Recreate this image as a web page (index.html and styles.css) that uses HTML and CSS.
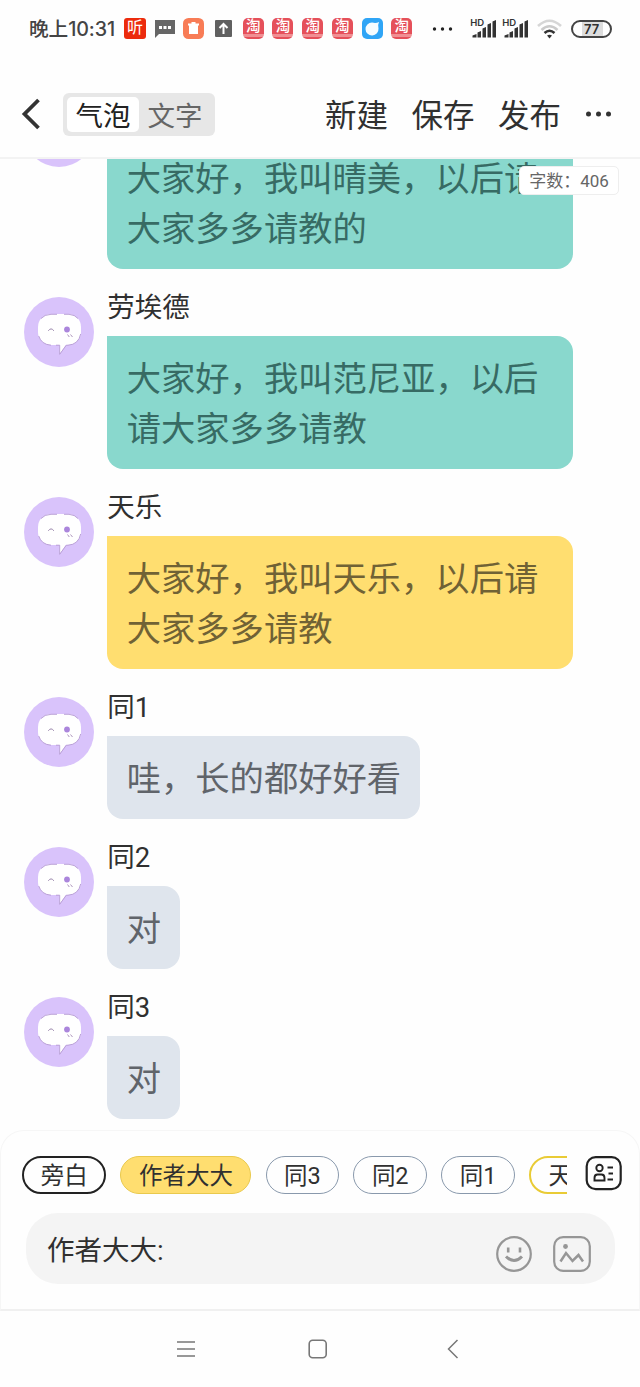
FILE: index.html
```
<!DOCTYPE html>
<html lang="zh-CN">
<head>
<meta charset="utf-8">
<title>气泡</title>
<link rel="stylesheet" href="styles.css">
</head>
<body>
<svg class="defs" width="0" height="0">
  <symbol id="avatar" viewBox="0 0 70 70">
    <circle cx="35" cy="35" r="35" fill="#d9c3fb"/>
    <rect x="14" y="17" width="43" height="31" rx="13" fill="#fff"/>
    <path d="M35.500 47V57.300L42.500 47Z" fill="#fff"/>
    <path d="M17 21.500Q20.500 17.500 27 17.300H33M40 17.300H45Q51 17.800 54 21.500M56.700 37Q54.500 47.500 44 48.200H42.300L35.700 57.300V48.200H32M27 48.200Q17.500 47.500 14.700 39" fill="none" stroke="#b49ad2" stroke-width=".9"/>
    <path d="M24.300 33.800Q27 30 29.900 33.800" fill="none" stroke="#9a86ac" stroke-width="1"/>
    <circle cx="43" cy="32.500" r="2.900" fill="#ab86dc"/>
    <path d="M43.500 37.500l1.800 2.500M46.500 37.500l2 2.500" stroke="#a58bb5" stroke-width=".9"/>
  </symbol>
  <symbol id="signal" viewBox="0 0 26 20">
    <path d="M1.500 18.500V16.500L5.500 15V18.500ZM6.500 18.500V13.500L10 12V18.500ZM11.500 18.500V9.500L15 8V18.500ZM16.500 18.500V5.500L20 4V18.500ZM21.500 18.500V2.500L25 1V18.500Z" fill="#333"/>
  </symbol>
</svg>

<header class="status">
  <span class="clock">晚上10:31</span>
  <div class="notices">
    <span class="app listen">听</span>
    <svg width="20" height="19" viewBox="0 0 20 19"><path d="M0 1H20V15H4L0 19Z" fill="#666"/><path d="M4 7h3v3H4zM8.500 7h3v3h-3zM13 7h3v3h-3z" fill="#fff"/></svg>
    <svg width="21" height="21" viewBox="0 0 21 21"><rect width="21" height="21" rx="5.500" fill="#f87c56"/><path d="M5 5.500H8.500V4H12.500V5.500H16V7.500H15V16H6V7.500H5Z" fill="#fff"/></svg>
    <svg class="up" width="17" height="17" viewBox="0 0 17 17"><rect width="17" height="17" rx="1" fill="#606060"/><path d="M8.500 14V4M4.500 8L8.500 4L12.500 8" fill="none" stroke="#fff" stroke-width="2"/></svg>
    <span class="app tao">淘</span>
    <span class="app tao">淘</span>
    <span class="app tao">淘</span>
    <span class="app tao">淘</span>
    <svg width="21" height="21" viewBox="0 0 21 21"><rect width="21" height="21" rx="5" fill="#2fa5f6"/><path d="M10 4.500Q14 5.500 17 4Q15.500 7 16.500 10.500A6.500 6.500 0 1 1 10 4.500Z" fill="#f5fcff"/></svg>
    <span class="app tao">淘</span>
  </div>
  <svg class="more" width="22" height="4" viewBox="0 0 22 4"><g fill="#222"><circle cx="2.500" cy="2" r="1.700"/><circle cx="10.500" cy="2" r="1.700"/><circle cx="18.500" cy="2" r="1.700"/></g></svg>
  <div class="radio"><span class="hd">HD</span><svg width="26" height="20"><use href="#signal"/></svg></div>
  <div class="radio second"><span class="hd">HD</span><svg width="26" height="20"><use href="#signal"/></svg></div>
  <svg class="wifi" width="25" height="20" viewBox="0 0 25 20"><g fill="none" stroke-width="2.600"><path d="M1 7Q12.500-3.500 24 7" stroke="#d6d6d6"/><path d="M4.500 11Q12.500 3.500 20.500 11" stroke="#cbcbcb"/><path d="M7.500 14Q12.500 9.500 17.500 14" stroke="#333"/></g><path d="M10 16.500Q12.500 15 15 16.500L12.500 19.500Z" fill="#333"/></svg>
  <span class="battery">77</span>
</header>

<nav class="toolbar">
  <svg class="back" width="20" height="34" viewBox="0 0 20 34"><path d="M17.500 3L3.500 17L17.500 31" fill="none" stroke="#333" stroke-width="3.800"/></svg>
  <div class="tabs"><span class="tab active">气泡</span><span class="tab">文字</span></div>
  <div class="actions"><span>新建</span><span>保存</span><span>发布</span></div>
  <svg class="menu" width="28" height="6" viewBox="0 0 28 6"><g fill="#333"><circle cx="3.500" cy="3" r="2.500"/><circle cx="13.500" cy="3" r="2.500"/><circle cx="23.500" cy="3" r="2.500"/></g></svg>
</nav>

<main class="chat">
  <div class="count">字数：406</div>
  <div class="messages">
    <article class="message"><svg class="avatar"><use href="#avatar"/></svg><div class="content"><div class="name"></div><div class="bubble teal">大家好，我叫晴美，以后请大家多多请教的</div></div></article>
    <article class="message"><svg class="avatar"><use href="#avatar"/></svg><div class="content"><div class="name">劳埃德</div><div class="bubble teal">大家好，我叫范尼亚，以后请大家多多请教</div></div></article>
    <article class="message"><svg class="avatar"><use href="#avatar"/></svg><div class="content"><div class="name">天乐</div><div class="bubble yellow">大家好，我叫天乐，以后请大家多多请教</div></div></article>
    <article class="message"><svg class="avatar"><use href="#avatar"/></svg><div class="content"><div class="name">同1</div><div class="bubble gray">哇，长的都好好看</div></div></article>
    <article class="message"><svg class="avatar"><use href="#avatar"/></svg><div class="content"><div class="name">同2</div><div class="bubble gray">对</div></div></article>
    <article class="message"><svg class="avatar"><use href="#avatar"/></svg><div class="content"><div class="name">同3</div><div class="bubble gray">对</div></div></article>
  </div>
</main>

<section class="composer">
  <div class="roles">
    <div class="chips">
      <span class="chip narrator">旁白</span><span class="chip author">作者大大</span><span class="chip">同3</span><span class="chip">同2</span><span class="chip">同1</span><span class="chip gold">天</span>
    </div>
    <svg class="contacts" width="37" height="35" viewBox="0 0 37 35"><g fill="none" stroke="#222"><rect x="1.700" y="1.200" width="34" height="32" rx="9" stroke-width="2.200"/><circle cx="14.500" cy="12" r="3.200" stroke-width="1.900"/><path d="M9.500 24.500V22Q9.500 18.500 12.500 18.500H16.500Q19.500 18.500 19.500 22V24.500Z" stroke-width="1.900"/><path d="M22.500 11.500H28M23.500 17.500H28M22.500 23.500H28" stroke-width="2"/></g></svg>
  </div>
  <div class="input">
    <span class="draft">作者大大:</span>
    <svg width="36" height="36" viewBox="0 0 36 36"><g fill="none" stroke="#969696"><circle cx="18" cy="18" r="16.800" stroke-width="2.200"/><path d="M12.200 11.500V16.500M24 11.500V16.500" stroke-width="2.600"/><path d="M10 20.500Q18 28.500 26 20.500" stroke-width="3"/></g></svg>
    <svg width="38" height="36" viewBox="0 0 38 36"><g fill="none" stroke="#969696" stroke-width="2.200"><rect x="1.200" y="1.200" width="35.600" height="33.600" rx="9"/><path d="M7.500 25.500L13 17L19.500 25L25.500 19L30 25.500" stroke-width="2.500"/></g><circle cx="12.500" cy="10.500" r="2.400" fill="#969696"/></svg>
  </div>
</section>

<footer class="system">
  <svg width="18" height="18" viewBox="0 0 18 18"><path d="M0 2H18M0 9H18M0 16H18" stroke="#777" stroke-width="1.500"/></svg>
  <svg width="20" height="20" viewBox="0 0 20 20"><rect x="1.200" y="1.200" width="17" height="17.600" rx="3.500" fill="none" stroke="#777" stroke-width="1.600"/></svg>
  <svg width="12" height="20" viewBox="0 0 12 20"><path d="M10.500 1L1.500 10L10.500 19" fill="none" stroke="#777" stroke-width="1.500"/></svg>
</footer>
</body>
</html>
```
FILE: styles.css
```
* { box-sizing: border-box; }
body {
  margin: 0;
  width: 640px;
  height: 1387px;
  overflow: hidden;
  display: flex;
  flex-direction: column;
  background: #fefefe;
  color: #303030;
  font-family: Roboto, "Noto Sans CJK SC", sans-serif;
  font-weight: 400;
  white-space: nowrap;
}
svg { display: block; flex: none; }
.defs { position: absolute; }

.status {
  height: 57px;
  flex: none;
  padding-left: 29px;
  display: flex;
  align-items: center;
}
.clock {
  width: 95px;
  font: 500 19.7px/30px Inter, "Noto Sans CJK SC", sans-serif;
  letter-spacing: -0.1px;
  color: #444;
}
.notices { display: flex; align-items: center; gap: 8.7px; }
.notices .up { margin: 0 2px; }
.app {
  width: 21px;
  height: 21px;
  border-radius: 5px;
  color: #fff;
  text-align: center;
  font-size: 16px;
  line-height: 20px;
}
.listen { background: #ec2b0d; border-radius: 3px; width: 22px; }
.tao {
  background: linear-gradient(#e5505a 76%, #f08f93 76%, #f08f93 90%, #e5505a 90%);
  font-size: 14.5px;
  font-weight: 500;
  line-height: 17px;
}
.more { margin-left: 20px; }
.radio { position: relative; margin-left: 17px; }
.radio.second { margin-left: 6px; }
.hd {
  position: absolute;
  left: -1px;
  top: -1px;
  font: 600 9.5px/9px Inter, sans-serif;
  color: #333;
}
.wifi { margin-left: 8px; }
.battery {
  width: 41px;
  height: 18px;
  margin-left: 9px;
  border: 2px solid #444;
  border-radius: 9px;
  background: linear-gradient(90deg, #fff 24%, #ddd 24%, #ddd 82%, #fff 82%);
  font: 600 13px/14px Inter, sans-serif;
  text-align: center;
}

.toolbar {
  height: 102px;
  flex: none;
  padding: 13px 0 0 21px;
  border-bottom: 2px solid #f3f3f3;
  display: flex;
  align-items: center;
}
.tabs {
  display: flex;
  width: 152px;
  height: 43px;
  margin: 2px 0 0 22px;
  padding: 4px;
  border-radius: 6px;
  background: #e7e7e7;
  font-size: 27.5px;
  line-height: 39px;
}
.tab { flex: 1; text-align: center; color: #666; }
.tab.active { background: #fff; color: #222; border-radius: 5px; }
.actions {
  display: flex;
  gap: 23.5px;
  margin-left: 110px;
  padding-top: 6px;
  font-size: 31.5px;
  line-height: 44px;
}
.menu { margin-left: 24px; }

.chat { height: 971px; flex: none; position: relative; overflow: hidden; }
.count {
  position: absolute;
  z-index: 1;
  left: 519px;
  top: 7px;
  width: 100px;
  height: 29px;
  border: 1px solid #eee;
  border-radius: 5px;
  background: #fff;
  color: #666;
  font-size: 17px;
  line-height: 29px;
  text-align: center;
}
.messages {
  margin-top: -62.4px;
  padding-left: 23.7px;
  display: flex;
  flex-direction: column;
  gap: 28px;
}
.message { display: flex; gap: 13.5px; }
.avatar { width: 70px; height: 70px; }
.content { display: flex; flex-direction: column; align-items: flex-start; }
.name { height: 39px; font-size: 27.5px; line-height: 22px; }
.bubble {
  max-width: 466px;
  padding: 18.5px 19px 14.5px 19.5px;
  border-radius: 0 16px 16px 16px;
  font-size: 34.3px;
  line-height: 50px;
  white-space: normal;
}
.teal { background: #89d8cd; color: #376b64; }
.yellow { background: #ffde70; color: #706235; }
.gray { background: #dfe5ed; color: #60646a; }

.composer {
  height: 181px;
  flex: none;
  padding: 25px 17px 0 21px;
  border: 1px solid #f6f6f6;
  border-bottom: 2px solid #f0f0f0;
  border-radius: 24px 24px 0 0;
  background: #fefefe;
}
.roles { display: flex; justify-content: space-between; }
.chips { width: 545px; display: flex; gap: 14.1px; overflow: hidden; }
.chip {
  flex: none;
  height: 38px;
  padding: 0 17.5px;
  border: 1.5px solid #8999ac;
  border-radius: 19px;
  font-size: 23.5px;
  line-height: 38px;
}
.narrator { border: 2px solid #222; padding: 0 16.7px; line-height: 37px; }
.author { background: #ffde70; border-color: #e9c94d; }
.gold { border: 2px solid #e9cb35; line-height: 37px; }
.input {
  height: 71px;
  width: 589px;
  margin: 19px 0 0 4px;
  padding: 11px 24px 0 21px;
  border-radius: 32px;
  background: #f4f4f4;
  display: flex;
  align-items: center;
  gap: 21px;
}
.draft { flex: 1; margin-top: -7px; font-size: 27.5px; line-height: 36px; }
.system {
  height: 76px;
  flex: none;
  padding-left: 177px;
  display: flex;
  align-items: center;
  gap: 113px;
}
.system svg:last-child { margin-left: 6px; }
```
